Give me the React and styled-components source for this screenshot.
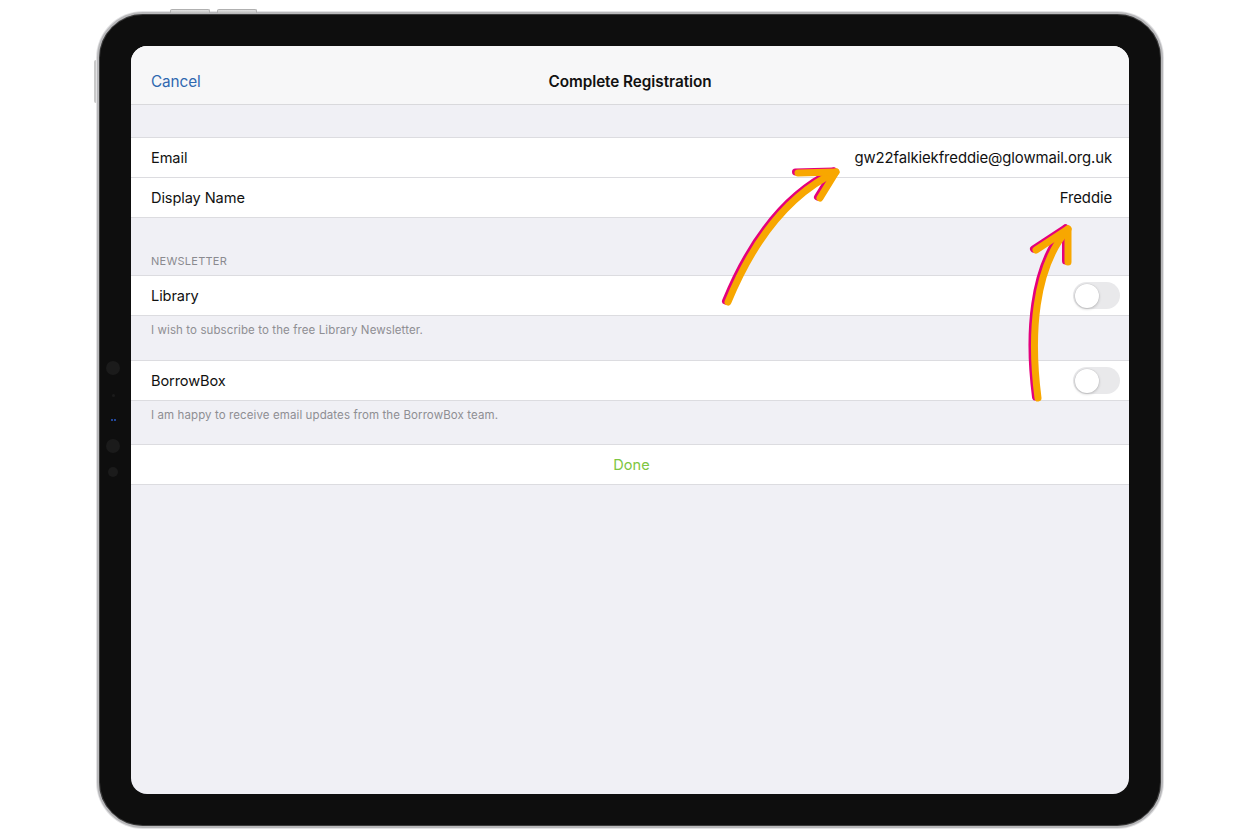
import React from "react";
import styled, { createGlobalStyle } from "styled-components";

const GlobalStyle = createGlobalStyle`
  html, body {
    margin: 0;
    padding: 0;
    background: #ffffff;
  }
  body {
    font-family: Inter, "Liberation Sans", Arial, sans-serif;
    -webkit-font-smoothing: antialiased;
  }
`;

const Page = styled.div`
  width: 1260px;
  height: 840px;
  box-sizing: border-box;
  padding-top: 12px;
  display: flex;
  justify-content: center;
  align-items: flex-start;
  overflow: hidden;
`;

const Device = styled.div`
  position: relative;
  width: 1066px;
  height: 816px;
  box-sizing: border-box;
  padding: 32px;
  border-radius: 46px;
  background: #0e0e0e;
  border: 2px solid #b8b8ba;
  box-shadow: 0 0 0 1px #e2e2e4, inset 0 0 0 1px #3a3a3a;
  display: flex;
`;

const TopButton = styled.div`
  position: absolute;
  top: -5px;
  left: ${(p) => p.left}px;
  width: 38px;
  height: 3px;
  border-radius: 2px 2px 0 0;
  background: linear-gradient(#e4e4e4, #bcbcbc);
  border: 1px solid #b0b0b0;
  border-bottom: none;
`;

const SideButton = styled.div`
  position: absolute;
  left: -5px;
  top: 46px;
  width: 2px;
  height: 43px;
  background: #c8c8c8;
  border-radius: 2px 0 0 2px;
`;

const Sensor = styled.div`
  position: absolute;
  left: ${(p) => 14 - p.size / 2 + (p.dx || 0)}px;
  top: ${(p) => p.top - p.size / 2}px;
  width: ${(p) => p.size}px;
  height: ${(p) => p.size}px;
  border-radius: 50%;
  background: ${(p) => p.color || "#1b1b1b"};
`;

const Screen = styled.div`
  position: relative;
  flex: 1;
  border-radius: 16px;
  overflow: hidden;
  background: #f0f0f5;
  display: flex;
  flex-direction: column;
`;

const NavBar = styled.div`
  height: 59px;
  flex: none;
  box-sizing: border-box;
  display: grid;
  grid-template-columns: 1fr auto 1fr;
  align-items: center;
  padding: 13px 20px 0;
  background: #f7f7f8;
  border-bottom: 1px solid #d9d9dc;
`;

const NavButton = styled.span`
  font-size: 15.3px;
  color: #2f68b0;
  letter-spacing: -0.1px;
`;

const Title = styled.span`
  font-size: 15.3px;
  font-weight: 600;
  color: #111;
  letter-spacing: -0.05px;
`;

const Spacer = styled.div`
  height: ${(p) => p.h}px;
  flex: none;
`;

const Group = styled.div`
  background: #fff;
  border-top: 1px solid #dcdce0;
  border-bottom: 1px solid #dcdce0;
  flex: none;
`;

const Row = styled.div`
  height: 39px;
  display: flex;
  align-items: center;
  justify-content: ${(p) => (p.center ? "center" : "space-between")};
  padding: 0 17px 0 20px;
  & + & {
    border-top: 1px solid #dcdce0;
  }
`;

const Label = styled.span`
  font-size: 14.6px;
  color: #111;
  letter-spacing: -0.1px;
`;

const Value = styled.span`
  font-size: 14.9px;
  color: #111;
  letter-spacing: -0.1px;
`;

const DoneText = styled.span`
  font-size: 14.6px;
  color: #7dc641;
`;

const SectionHeader = styled.div`
  height: 57px;
  flex: none;
  box-sizing: border-box;
  display: flex;
  align-items: flex-end;
  padding: 0 20px 7px;
  font-size: 11px;
  color: #8a8a8f;
  letter-spacing: 0.25px;
`;

const Footer = styled.div`
  height: ${(p) => p.h}px;
  flex: none;
  box-sizing: border-box;
  padding: 7px 20px 0;
  font-size: 11.5px;
  color: #8e8e93;
  letter-spacing: 0.1px;
`;

const Switch = styled.div`
  width: 47px;
  height: 27px;
  margin-right: -8px;
  box-sizing: border-box;
  border-radius: 14px;
  background: #e9e9eb;
  padding: 2px;
  display: flex;
  align-items: center;
`;

const Knob = styled.div`
  width: 24px;
  height: 24px;
  border-radius: 50%;
  background: #fff;
  box-shadow: 0 1px 3px rgba(0, 0, 0, 0.22), 0 0 0 0.5px rgba(0, 0, 0, 0.06);
`;

const Overlay = styled.svg`
  position: absolute;
  left: 0;
  top: 0;
  width: 100%;
  height: 100%;
  pointer-events: none;
`;

const Toggle = () => (
  <Switch>
    <Knob />
  </Switch>
);

const Arrow = ({ d }) => (
  <g fill="none" strokeLinecap="round" strokeLinejoin="round">
    <g transform="translate(-2.5 -1)" stroke="#e4007c" strokeWidth="7">
      {d.map((p) => (
        <path key={p} d={p} />
      ))}
    </g>
    <g stroke="#f8a700" strokeWidth="7">
      {d.map((p) => (
        <path key={p} d={p} />
      ))}
    </g>
  </g>
);

export default function App() {
  return (
    <>
      <GlobalStyle />
      <Page>
        <Device>
          <TopButton left={71} />
          <TopButton left={118} />
          <SideButton />
          <Sensor top={354} size={14} />
          <Sensor top={381} size={3} />
          <Sensor top={406} size={2} dx={-1.5} color="#2b5bc8" />
          <Sensor top={406} size={2} dx={1.5} color="#2b5bc8" />
          <Sensor top={432} size={14} />
          <Sensor top={458} size={10} />
          <Screen>
            <NavBar>
              <NavButton>Cancel</NavButton>
              <Title>Complete Registration</Title>
              <span />
            </NavBar>
            <Spacer h={32} />
            <Group>
              <Row>
                <Label>Email</Label>
                <Value>gw22falkiekfreddie@glowmail.org.uk</Value>
              </Row>
              <Row>
                <Label>Display Name</Label>
                <Value>Freddie</Value>
              </Row>
            </Group>
            <SectionHeader>NEWSLETTER</SectionHeader>
            <Group>
              <Row>
                <Label>Library</Label>
                <Toggle />
              </Row>
            </Group>
            <Footer h={44}>I wish to subscribe to the free Library Newsletter.</Footer>
            <Group>
              <Row>
                <Label>BorrowBox</Label>
                <Toggle />
              </Row>
            </Group>
            <Footer h={43}>I am happy to receive email updates from the BorrowBox team.</Footer>
            <Group>
              <Row center>
                <DoneText>Done</DoneText>
              </Row>
            </Group>
            <Overlay viewBox="0 0 998 748">
              <Arrow
                d={[
                  "M597 256 C618 205 650 152 705 126",
                  "M667 127 L705 126 L689 152",
                ]}
              />
              <Arrow
                d={[
                  "M907 352 C899 290 903 222 937 183",
                  "M905 204 L937 183 L937 216",
                ]}
              />
            </Overlay>
          </Screen>
        </Device>
      </Page>
    </>
  );
}
